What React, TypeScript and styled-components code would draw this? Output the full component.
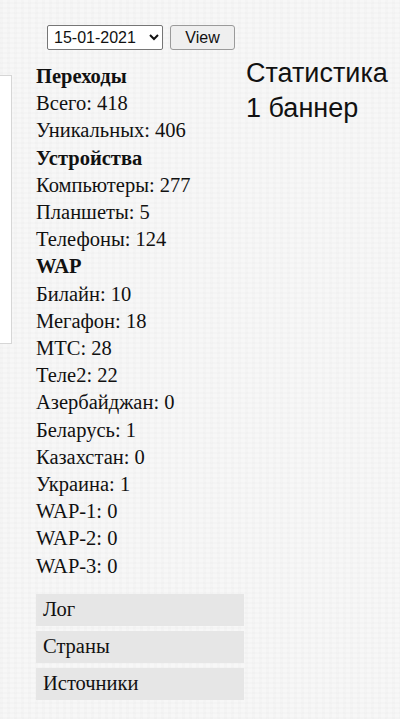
import styled, { createGlobalStyle } from "styled-components";

const GlobalStyle = createGlobalStyle`
    html, body {
        margin: 0;
        padding: 0;
    }
    body {
        background-color: #f7f7f7;
        background-image:
            repeating-linear-gradient(0deg, rgba(0,0,0,0.012) 0 2px, transparent 2px 5px),
            repeating-linear-gradient(90deg, rgba(0,0,0,0.012) 0 3px, transparent 3px 7px);
        font-family: "Liberation Serif", "Times New Roman", serif;
        color: #111;
        min-height: 719px;
    }
`

const Page = styled.div`
    width: 400px;
    min-height: 719px;
    overflow: hidden;
`

const Toolbar = styled.form`
    display: flex;
    align-items: center;
    gap: 7px;
    padding: 25px 0 0 47px;
    height: 25px;
`

const DateSelect = styled.select`
    height: 25px;
    width: 116px;
    font-family: "Liberation Sans", Arial, sans-serif;
    font-size: 16px;
    color: #111;
    background: #fff;
    border: 1px solid #767676;
    border-radius: 2px;
    padding: 0 2px;
`

const ViewButton = styled.button`
    height: 25px;
    width: 65px;
    font-family: "Liberation Sans", Arial, sans-serif;
    font-size: 16px;
    color: #111;
    background: #efefef;
    border: 1px solid #9a9a9a;
    border-radius: 3px;
    padding: 0;
`

const Content = styled.div`
    display: flex;
    align-items: flex-start;
    margin-top: 13px;
`

const Sidebar = styled.div`
    width: 11px;
    height: 267px;
    margin-top: 12px;
    background: #fff;
    border: 1px solid #d6d6d6;
    border-left: none;
    flex-shrink: 0;
`

const Stats = styled.div`
    width: 210px;
    margin-left: 24px;
    flex-shrink: 0;
`

const Line = styled.div<{ $bold?: boolean }>`
    font-size: 20.5px;
    line-height: 27.2px;
    font-weight: ${p => (p.$bold ? 700 : 400)};
    white-space: nowrap;
`

const Menu = styled.div`
    display: flex;
    flex-direction: column;
    gap: 5px;
    margin-top: 14px;
    width: 208px;
`

const MenuItem = styled.div`
    height: 32px;
    display: flex;
    align-items: center;
    padding-left: 7px;
    background: #e6e6e6;
    font-size: 20.5px;
    cursor: pointer;
`

const Title = styled.div`
    font-family: "Liberation Sans", Arial, sans-serif;
    font-size: 27px;
    line-height: 35px;
    color: #111;
    margin-top: -7px;
    white-space: nowrap;
`

const groups: { title: string; rows: [string, number][] }[] = [
    { title: "Переходы", rows: [["Всего", 418], ["Уникальных", 406]] },
    { title: "Устройства", rows: [["Компьютеры", 277], ["Планшеты", 5], ["Телефоны", 124]] },
    {
        title: "WAP",
        rows: [
            ["Билайн", 10], ["Мегафон", 18], ["МТС", 28], ["Теле2", 22],
            ["Азербайджан", 0], ["Беларусь", 1], ["Казахстан", 0], ["Украина", 1],
            ["WAP-1", 0], ["WAP-2", 0], ["WAP-3", 0],
        ],
    },
]

export default function App() {
    return (
        <Page>
            <GlobalStyle />
            <Toolbar onSubmit={e => e.preventDefault()}>
                <DateSelect defaultValue="15-01-2021">
                    <option>15-01-2021</option>
                    <option>14-01-2021</option>
                </DateSelect>
                <ViewButton type="submit">View</ViewButton>
            </Toolbar>
            <Content>
                <Sidebar />
                <Stats>
                    {groups.map(g => (
                        <div key={g.title}>
                            <Line $bold>{g.title}</Line>
                            {g.rows.map(([name, val]) => (
                                <Line key={name}>{name}: {val}</Line>
                            ))}
                        </div>
                    ))}
                    <Menu>
                        <MenuItem>Лог</MenuItem>
                        <MenuItem>Страны</MenuItem>
                        <MenuItem>Источники</MenuItem>
                    </Menu>
                </Stats>
                <Title>
                    Статистика<br />1 баннер
                </Title>
            </Content>
        </Page>
    );
}
